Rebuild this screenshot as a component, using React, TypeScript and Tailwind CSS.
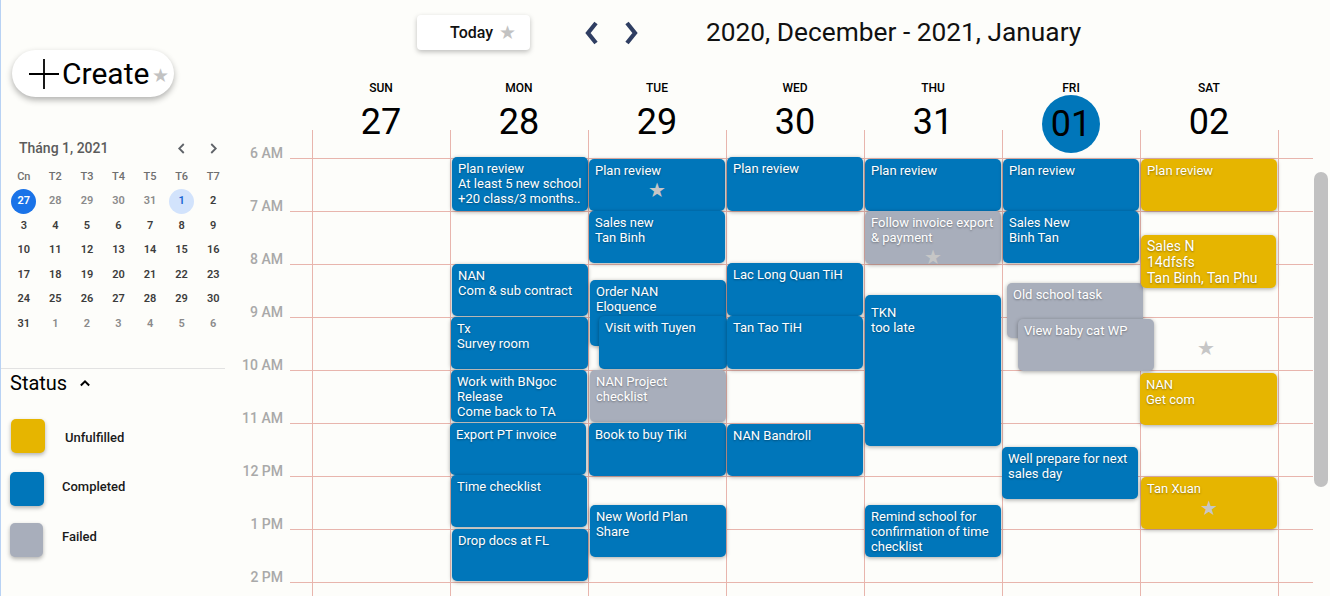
import clsx from 'clsx'

type Kind = 'blue' | 'yellow' | 'gray'

type CalEvent = {
  x0: number
  y0: number
  x1: number
  y1: number
  lines: string[]
  kind: Kind
  star?: boolean
  pt?: number
  big?: boolean
}

type Day = {
  name: string
  num: string
  left: number
  today?: boolean
  events: CalEvent[]
  freeStar?: { x: number; y: number }
}

const LINE = 'border-[#e8b5ad]'
const BODY_TOP = 130
const HOURS = ['6 AM', '7 AM', '8 AM', '9 AM', '10 AM', '11 AM', '12 PM', '1 PM', '2 PM']

const kindClass: Record<Kind, string> = {
  blue: 'bg-[#0076ba]',
  yellow: 'bg-[#e6b500]',
  gray: 'bg-[#a8aebb]',
}

const DAYS: Day[] = [
  { name: 'SUN', num: '27', left: 312, events: [] },
  {
    name: 'MON',
    num: '28',
    left: 450,
    events: [
      { x0: 452, y0: 157, x1: 588, y1: 211, kind: 'blue', lines: ['Plan review', 'At least 5 new school', '+20 class/3 months..'] },
      { x0: 452, y0: 264, x1: 588, y1: 316, kind: 'blue', lines: ['NAN', 'Com & sub contract'] },
      { x0: 451, y0: 317, x1: 588, y1: 369, kind: 'blue', lines: ['Tx', 'Survey room'] },
      { x0: 451, y0: 370, x1: 587, y1: 422, kind: 'blue', lines: ['Work with BNgoc', 'Release', 'Come back to TA'] },
      { x0: 450, y0: 423, x1: 586, y1: 475, kind: 'blue', lines: ['Export PT invoice'] },
      { x0: 451, y0: 475, x1: 587, y1: 527, kind: 'blue', lines: ['Time checklist'] },
      { x0: 452, y0: 529, x1: 588, y1: 581, kind: 'blue', lines: ['Drop docs at FL'] },
    ],
  },
  {
    name: 'TUE',
    num: '29',
    left: 588,
    events: [
      { x0: 589, y0: 159, x1: 725, y1: 211, kind: 'blue', lines: ['Plan review'], star: true },
      { x0: 589, y0: 211, x1: 725, y1: 263, kind: 'blue', lines: ['Sales new', 'Tan Binh'] },
      { x0: 590, y0: 280, x1: 726, y1: 346, kind: 'blue', lines: ['Order NAN', 'Eloquence'] },
      { x0: 599, y0: 316, x1: 727, y1: 369, kind: 'blue', lines: ['Visit with Tuyen'] },
      { x0: 590, y0: 370, x1: 726, y1: 422, kind: 'gray', lines: ['NAN Project', 'checklist'] },
      { x0: 589, y0: 423, x1: 726, y1: 476, kind: 'blue', lines: ['Book to buy Tiki'] },
      { x0: 590, y0: 505, x1: 726, y1: 557, kind: 'blue', lines: ['New World Plan', 'Share'] },
    ],
  },
  {
    name: 'WED',
    num: '30',
    left: 726,
    events: [
      { x0: 727, y0: 157, x1: 863, y1: 211, kind: 'blue', lines: ['Plan review'] },
      { x0: 727, y0: 263, x1: 863, y1: 316, kind: 'blue', lines: ['Lac Long Quan TiH'] },
      { x0: 727, y0: 316, x1: 863, y1: 369, kind: 'blue', lines: ['Tan Tao TiH'] },
      { x0: 727, y0: 424, x1: 863, y1: 476, kind: 'blue', lines: ['NAN Bandroll'] },
    ],
  },
  {
    name: 'THU',
    num: '31',
    left: 864,
    events: [
      { x0: 865, y0: 159, x1: 1001, y1: 211, kind: 'blue', lines: ['Plan review'] },
      { x0: 865, y0: 211, x1: 1001, y1: 264, kind: 'gray', lines: ['Follow invoice export', '& payment'], star: true },
      { x0: 865, y0: 295, x1: 1001, y1: 446, kind: 'blue', lines: ['TKN', 'too late'], pt: 10 },
      { x0: 865, y0: 505, x1: 1001, y1: 557, kind: 'blue', lines: ['Remind school for', 'confirmation of time', 'checklist'] },
    ],
  },
  {
    name: 'FRI',
    num: '01',
    left: 1002,
    today: true,
    events: [
      { x0: 1003, y0: 159, x1: 1139, y1: 211, kind: 'blue', lines: ['Plan review'] },
      { x0: 1003, y0: 211, x1: 1139, y1: 263, kind: 'blue', lines: ['Sales New', 'Binh Tan'] },
      { x0: 1007, y0: 283, x1: 1143, y1: 338, kind: 'gray', lines: ['Old school task'] },
      { x0: 1018, y0: 319, x1: 1154, y1: 371, kind: 'gray', lines: ['View baby cat WP'] },
      { x0: 1002, y0: 447, x1: 1138, y1: 499, kind: 'blue', lines: ['Well prepare for next', 'sales day'] },
    ],
  },
  {
    name: 'SAT',
    num: '02',
    left: 1140,
    freeStar: { x: 1206, y: 348 },
    events: [
      { x0: 1141, y0: 159, x1: 1277, y1: 211, kind: 'yellow', lines: ['Plan review'] },
      { x0: 1141, y0: 235, x1: 1276, y1: 288, kind: 'yellow', lines: ['Sales N', '14dfsfs', 'Tan Binh, Tan Phu'], pt: 3, big: true },
      { x0: 1140, y0: 373, x1: 1277, y1: 425, kind: 'yellow', lines: ['NAN', 'Get com'] },
      { x0: 1141, y0: 477, x1: 1277, y1: 529, kind: 'yellow', lines: ['Tan Xuan'], star: true },
    ],
  },
]

const MINI_WEEK = ['Cn', 'T2', 'T3', 'T4', 'T5', 'T6', 'T7']
const MINI_DATES: { d: number; muted?: boolean; selected?: boolean; today?: boolean }[] = [
  { d: 27, selected: true },
  { d: 28, muted: true },
  { d: 29, muted: true },
  { d: 30, muted: true },
  { d: 31, muted: true },
  { d: 1, today: true },
  { d: 2 },
  ...Array.from({ length: 29 }, (_, i) => ({ d: i + 3 })),
  ...[1, 2, 3, 4, 5, 6].map((d) => ({ d, muted: true })),
]

function Slots() {
  return (
    <div className="pt-[28px]">
      {HOURS.map((h) => (
        <div key={h} className={clsx('h-[53px] border-t', LINE)} />
      ))}
    </div>
  )
}

function Chevron({ dir, className }: { dir: 'left' | 'right' | 'up'; className?: string }) {
  const d = dir === 'left' ? 'M13 3 L5 13 L13 23' : dir === 'right' ? 'M5 3 L13 13 L5 23' : 'M2 9 L7 4 L12 9'
  const vb = dir === 'up' ? '0 0 14 12' : '0 0 18 26'
  return (
    <svg viewBox={vb} className={className} fill="none" stroke="currentColor">
      <path d={d} strokeWidth={dir === 'up' ? 2.4 : 4.2} strokeLinejoin="miter" />
    </svg>
  )
}

function MiniChevron({ dir }: { dir: 'left' | 'right' }) {
  return (
    <svg viewBox="0 0 10 14" className="w-[9px] h-[13px] text-[#5f6368]" fill="none" stroke="currentColor">
      <path d={dir === 'left' ? 'M7.5 2 L2.5 7 L7.5 12' : 'M2.5 2 L7.5 7 L2.5 12'} strokeWidth={2} />
    </svg>
  )
}

function Sidebar() {
  return (
    <aside className="w-[230px] shrink-0 border-l border-[#b8d2f4] flex flex-col">
      <button className="ml-[11px] mt-[50px] w-[162px] h-[47px] rounded-full bg-white shadow-[0_3px_6px_rgba(0,0,0,0.3)] flex items-center pl-[15px]">
        <svg viewBox="0 0 34 34" className="w-[34px] h-[34px] text-black" fill="none" stroke="currentColor">
          <path d="M17 2 V32 M2 17 H32" strokeWidth={1.8} />
        </svg>
        <span className="ml-[1px] text-[30px] leading-none text-black">Create</span>
        <span className="ml-[3px] mt-[4px] text-[19px] leading-none text-[#c2c2c2]">★</span>
      </button>

      <div className="ml-[7px] mt-[41px] w-[221px] grid grid-cols-7">
        <div className="col-span-5 h-[20px] flex items-center pl-[11px] text-[14px] font-medium text-[#5b5b5b]">
          Tháng 1, 2021
        </div>
        <div className="h-[20px] flex items-center justify-center">
          <MiniChevron dir="left" />
        </div>
        <div className="h-[20px] flex items-center justify-center">
          <MiniChevron dir="right" />
        </div>
        <div className="col-span-7 h-[7px]" />
        {MINI_WEEK.map((w) => (
          <div key={w} className="h-[24px] flex items-center justify-center text-[11px] font-medium text-[#6f6f6f]">
            {w}
          </div>
        ))}
        {MINI_DATES.map((m, i) => (
          <div key={i} className="h-[24.5px] flex items-center justify-center">
            <span
              className={clsx(
                'w-[25px] h-[25px] rounded-full flex items-center justify-center text-[11px] font-semibold',
                m.selected && 'bg-[#1a73e8] text-white',
                m.today && 'bg-[#d2e3fc] text-[#1967d2]',
                !m.selected && !m.today && (m.muted ? 'text-[#8a8a8a]' : 'text-[#3c3c3c]'),
              )}
            >
              {m.d}
            </span>
          </div>
        ))}
      </div>

      <div className="mt-[32px] h-px w-[224px] bg-[#e2e2e2]" />
      <div className="mt-[2px] ml-[9px] flex items-center h-[24px]">
        <span className="text-[20px] leading-[24px] text-black">Status</span>
        <Chevron dir="up" className="ml-[12px] w-[12px] h-[10px] text-black" />
      </div>

      <div className="mt-[24px] ml-[10px] flex flex-col">
        <div className="flex items-center">
          <div className="w-[34px] h-[34px] rounded-[5px] bg-[#e6b500] shadow-[0_2px_4px_rgba(0,0,0,0.3)]" />
          <span className="ml-[20px] mt-[4px] text-[13px] font-medium text-[#1a1a1a]">Unfulfilled</span>
        </div>
        <div className="mt-[19px] flex items-center">
          <div className="-ml-px w-[34px] h-[34px] rounded-[5px] bg-[#0076ba] shadow-[0_2px_4px_rgba(0,0,0,0.3)]" />
          <span className="ml-[18px] -mt-[4px] text-[13px] font-medium text-[#1a1a1a]">Completed</span>
        </div>
        <div className="mt-[17px] flex items-center">
          <div className="-ml-px w-[33px] h-[34px] rounded-[5px] bg-[#a8aebb] shadow-[0_2px_4px_rgba(0,0,0,0.3)]" />
          <span className="ml-[19px] -mt-[6px] text-[13px] font-medium text-[#1a1a1a]">Failed</span>
        </div>
      </div>
    </aside>
  )
}

function EventBox({ ev, colLeft }: { ev: CalEvent; colLeft: number }) {
  return (
    <div
      className={clsx(
        'absolute z-10 rounded-[5px] px-[6px] text-white shadow-[0_1px_4px_rgba(0,0,0,0.35)] [text-shadow:0_1px_2px_rgba(0,0,0,0.35)]',
        ev.big ? 'text-[14px] leading-[16px]' : 'text-[13px] leading-[15px]',
        kindClass[ev.kind],
      )}
      style={{
        left: ev.x0 - colLeft - 1,
        top: ev.y0 - BODY_TOP,
        width: ev.x1 - ev.x0,
        height: ev.y1 - ev.y0,
        paddingTop: ev.pt ?? 4,
      }}
    >
      {ev.lines.map((l) => (
        <div key={l} className="whitespace-nowrap">
          {l}
        </div>
      ))}
      {ev.star && <div className="mt-[2px] text-center text-[20px] leading-[20px] text-[#c6c6c6] [text-shadow:none]">★</div>}
    </div>
  )
}

export default function App() {
  return (
    <div className="w-[1330px] h-[596px] overflow-hidden flex bg-[#fdfdfa] font-['Roboto',sans-serif] text-black">
      <Sidebar />
      <main className="flex-1 min-w-0 flex flex-col">
        <div className="h-[66px] shrink-0">
          <div className="mt-[15px] h-[35px] flex items-center">
            <button className="ml-[187px] w-[113px] h-[35px] rounded-[4px] bg-white shadow-[0_2px_5px_rgba(0,0,0,0.25)] flex items-center pl-[33px]">
              <span className="text-[16px] font-medium text-[#111]">Today</span>
              <span className="ml-[6px] text-[19px] leading-none text-[#c2c2c2]">★</span>
            </button>
            <Chevron dir="left" className="ml-[53px] w-[18px] h-[26px] text-[#2f3e62]" />
            <Chevron dir="right" className="ml-[21px] w-[18px] h-[26px] text-[#2f3e62]" />
            <h1 className="ml-[66px] text-[26.3px] leading-none text-[#111]">2020, December - 2021, January</h1>
          </div>
        </div>

        <div className="h-[64px] shrink-0 flex">
          <div className="w-[82px] shrink-0" />
          {DAYS.map((d) => (
            <div key={d.name} className="w-[138px] shrink-0 flex flex-col items-center pt-[15px]">
              <div className="text-[12px] leading-[14px] font-medium">{d.name}</div>
              {d.today ? (
                <div className="w-[58px] h-[58px] shrink-0 rounded-full bg-[#0076ba] flex items-center justify-center text-[36px] leading-none">
                  {d.num}
                </div>
              ) : (
                <div className="mt-[9px] text-[36px] leading-[36px]">{d.num}</div>
              )}
            </div>
          ))}
        </div>

        <div className="flex-1 flex min-h-0 overflow-hidden">
          <div className="w-[60px] shrink-0 pt-[15px] pr-[7px] text-right text-[14px] leading-[16px] font-medium text-[#a9a9a9]">
            {HOURS.map((h) => (
              <div key={h} className="h-[53px]">
                {h}
              </div>
            ))}
          </div>
          <div className="w-[22px] shrink-0">
            <Slots />
          </div>
          {DAYS.map((d) => (
            <div key={d.name} className={clsx('relative w-[138px] shrink-0 border-l', LINE)}>
              <Slots />
              {d.events.map((ev, i) => (
                <EventBox key={i} ev={ev} colLeft={d.left} />
              ))}
              {d.freeStar && (
                <span
                  className="absolute z-10 text-[20px] leading-[20px] text-[#c6c6c6]"
                  style={{ left: d.freeStar.x - d.left - 10, top: d.freeStar.y - BODY_TOP - 10 }}
                >
                  ★
                </span>
              )}
            </div>
          ))}
          <div className={clsx('w-[35px] shrink-0 border-l', LINE)}>
            <Slots />
          </div>
          <div className="w-[15px] shrink-0">
            <div className="mt-[42px] mx-auto w-[14px] h-[315px] rounded-full bg-[#c1c1c1]" />
          </div>
        </div>
      </main>
    </div>
  )
}
